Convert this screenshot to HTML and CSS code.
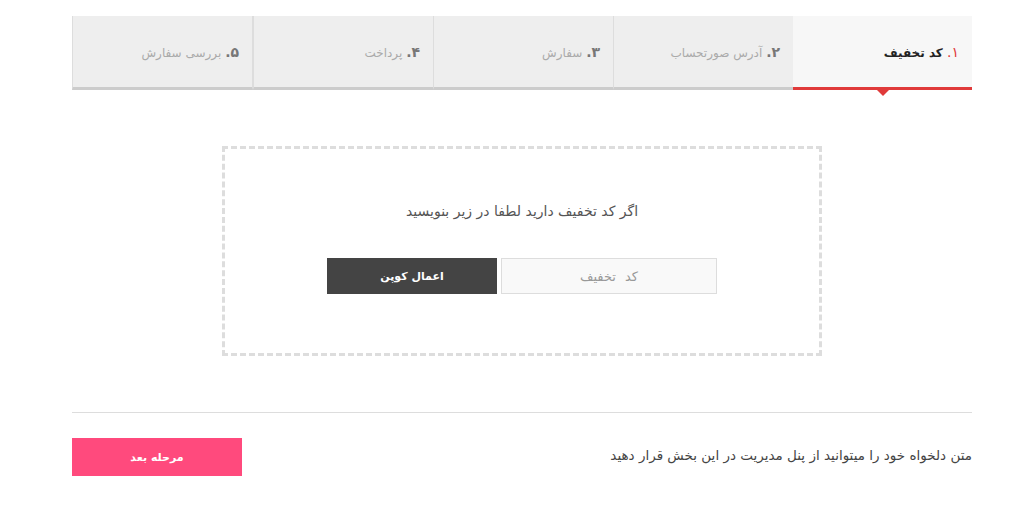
FILE: index.html
```html
<!DOCTYPE html>
<html lang="fa" dir="rtl">
<head>
  <meta charset="UTF-8">
  <meta name="viewport" content="width=device-width, initial-scale=1.0">
  <title>تکمیل سفارش</title>
  <link rel="stylesheet" href="styles.css">
</head>
<body>
  <div class="checkout">
    <!-- مراحل سفارش -->
    <ul class="steps">
      <li class="step active"><b>۱.</b> کد تخفیف</li>
      <li class="step"><b>۲.</b> آدرس صورتحساب</li>
      <li class="step"><b>۳.</b> سفارش</li>
      <li class="step"><b>۴.</b> پرداخت</li>
      <li class="step"><b>۵.</b> بررسی سفارش</li>
    </ul>

    <div class="coupon-box">
      <p class="coupon-title">اگر کد تخفیف دارید لطفا در زیر بنویسید</p>
      <form class="coupon-form">
        <input type="text" class="coupon-input" placeholder="کد تخفیف">
        <button type="button" class="coupon-button">اعمال کوپن</button>
      </form>
    </div>

    <div class="separator"></div>

    <div class="footer-row">
      <p class="footer-text">متن دلخواه خود را میتوانید از پنل مدیریت در این بخش قرار دهید</p>
      <button type="button" class="next-button">مرحله بعد</button>
    </div>
  </div>
</body>
</html>
```

FILE: styles.css
```css
body {
  margin: 0;
  padding: 0;
  background-color: #fff;
  font-family: "DejaVu Sans", "Noto Sans", sans-serif;
  color: #444;
}
.checkout {
  width: 900px;
  margin: 16px 64px 0 72px;
}
.steps {
  display: flex;
  list-style-type: none;
  margin: 0;
  padding: 0;
}
.step {
  position: relative;
  flex: 1;
  height: 71px;
  line-height: 72px;
  padding: 0 13px;
  background-color: #eee;
  border-bottom: 3px solid #ccc;
  border-left: 1px solid #ddd;
  font-size: 12px;
  color: #aaa;
  white-space: nowrap;
}
.step:last-child {
  border-right: 1px solid #ddd;
}
.step b {
  color: #777;
  font-size: 14px;
}
.step.active {
  background-color: #f7f7f7;
  border-bottom-color: #e03a3a;
  border-left: none;
  color: #222;
  font-weight: bold;
}
.step.active b {
  color: #e03a3a;
  font-weight: normal;
}
.step.active::after {
  content: "";
  position: absolute;
  left: 50%;
  bottom: -9px;
  margin-left: -6px;
  border-left: 6px solid transparent;
  border-right: 6px solid transparent;
  border-top: 6px solid #e03a3a;
}
.coupon-box {
  width: 594px;
  height: 204px;
  margin: 56px auto 0;
  border: 3px dashed #ddd;
  text-align: center;
}
.coupon-title {
  margin: 54px 0 39px;
  font-size: 14px;
  color: #555;
}
.coupon-form {
  display: flex;
  justify-content: center;
  gap: 4px;
}
.coupon-input {
  width: 214px;
  height: 34px;
  padding: 0;
  border: 1px solid #ddd;
  background-color: #f9f9f9;
  font-family: inherit;
  font-size: 13px;
  text-align: center;
  word-spacing: 5px;
}
.coupon-input::placeholder {
  color: #999;
}
.coupon-button {
  width: 170px;
  height: 36px;
  border: none;
  background-color: #444;
  color: #fff;
  font-family: inherit;
  font-size: 11px;
  font-weight: bold;
}
.separator {
  height: 1px;
  margin-top: 56px;
  background-color: #ddd;
}
.footer-row {
  display: flex;
  justify-content: space-between;
  align-items: center;
  margin-top: 25px;
}
.footer-text {
  margin: 0 0 4px;
  font-size: 13.5px;
  color: #444;
}
.next-button {
  width: 170px;
  height: 38px;
  border: none;
  background-color: #ff4a7d;
  color: #fff;
  font-family: inherit;
  font-size: 11px;
  font-weight: bold;
}
```
